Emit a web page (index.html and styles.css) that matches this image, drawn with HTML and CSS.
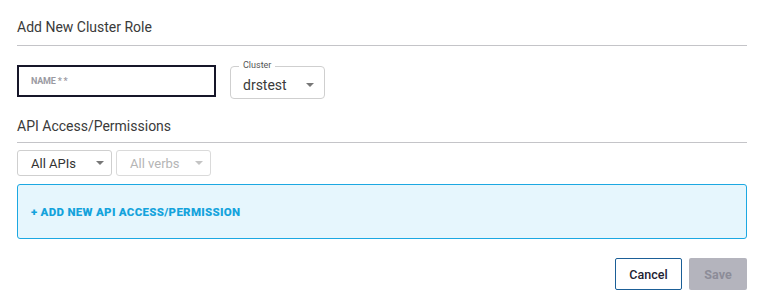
FILE: index.html
```html
<!DOCTYPE html>
<html lang="en">
<head>
    <meta charset="UTF-8">
    <meta name="viewport" content="width=device-width, initial-scale=1.0">
    <title>Add New Cluster Role</title>
    <link rel="stylesheet" href="styles.css">
</head>
<body>
    <div class="container">
        <h2 class="section-title">Add New Cluster Role</h2>

        <div class="form-row">
            <div class="name-field">
                <span class="name-label">NAME * *</span>
            </div>
            <div class="outlined-select">
                <span class="legend">Cluster</span>
                <span class="select-value">drstest</span>
                <span class="caret"></span>
            </div>
        </div>

        <h2 class="section-title sub">API Access/Permissions</h2>

        <div class="filter-row">
            <div class="small-select">
                <span>All APIs</span>
                <span class="caret"></span>
            </div>
            <div class="small-select disabled">
                <span>All verbs</span>
                <span class="caret"></span>
            </div>
        </div>

        <div class="add-box">
            <span class="add-link">+ ADD NEW API ACCESS/PERMISSION</span>
        </div>

        <div class="actions">
            <button class="btn-cancel">Cancel</button>
            <button class="btn-save" disabled>Save</button>
        </div>
    </div>
</body>
</html>
```

FILE: styles.css
```css
body {
    margin: 0;
    font-family: Roboto, "Liberation Sans", sans-serif;
    background: #ffffff;
    color: #333333;
}

.container {
    padding: 16px 16px 0 17px;
}

.section-title {
    margin: 0;
    font-size: 14px;
    font-weight: 400;
    color: #3a3a3a;
    padding: 3px 0 10px;
    border-bottom: 1px solid #c4c4c8;
}

.section-title.sub {
    padding: 1px 0 8px;
}

.form-row {
    display: flex;
    align-items: flex-start;
    gap: 14px;
    margin-top: 19px;
    margin-bottom: 18px;
}

.name-field {
    box-sizing: border-box;
    width: 199px;
    height: 32px;
    border: 2px solid #161629;
    display: flex;
    align-items: center;
    padding-left: 12px;
}

.name-label {
    font-size: 9px;
    font-weight: 700;
    color: #9a9aa2;
    letter-spacing: -0.2px;
}

.outlined-select {
    position: relative;
    box-sizing: border-box;
    width: 95px;
    height: 33px;
    margin-top: 1px;
    border: 1px solid #cfcfcf;
    border-radius: 4px;
    display: flex;
    align-items: center;
    padding: 4px 0 0 12px;
}

.legend {
    position: absolute;
    top: -7px;
    left: 8px;
    background: #fff;
    padding: 0 4px;
    font-size: 9px;
    color: #555;
}

.select-value {
    font-size: 14px;
    color: #3a3a3a;
    flex: 1;
}

.caret {
    width: 0;
    height: 0;
    border-left: 4px solid transparent;
    border-right: 4px solid transparent;
    border-top: 4px solid #777;
    margin-right: 10px;
}

.filter-row {
    display: flex;
    gap: 4px;
    margin-top: 7px;
}

.small-select {
    box-sizing: border-box;
    width: 95px;
    height: 26px;
    border: 1px solid #cfcfcf;
    border-radius: 3px;
    display: flex;
    align-items: center;
    justify-content: space-between;
    padding-left: 13px;
    font-size: 13px;
    color: #333;
}

.small-select .caret {
    margin-right: 7px;
}

.small-select.disabled {
    color: #b5b5b5;
    border-color: #dadada;
}

.small-select.disabled .caret {
    border-top-color: #c4c4c4;
}

.add-box {
    box-sizing: border-box;
    height: 55px;
    margin-top: 8px;
    background: #e6f6fd;
    border: 1px solid #1ca8e2;
    border-radius: 3px;
    display: flex;
    align-items: center;
    padding-left: 13px;
}

.add-link {
    font-size: 11.5px;
    font-weight: 900;
    color: #14a3dc;
    letter-spacing: 0.3px;
}

.actions {
    display: flex;
    justify-content: flex-end;
    gap: 7px;
    margin-top: 19px;
}

.btn-cancel,
.btn-save {
    font-family: Roboto, "Liberation Sans", sans-serif;
    font-size: 12.5px;
    height: 32px;
    border-radius: 2px;
    cursor: pointer;
}

.btn-cancel {
    width: 67px;
    background: #fff;
    border: 1px solid #1b5f97;
    color: #222233;
    font-weight: 500;
}

.btn-save {
    width: 58px;
    background: #b4b4bd;
    border: none;
    color: #8c8c98;
    font-weight: 700;
    cursor: not-allowed;
}
```
